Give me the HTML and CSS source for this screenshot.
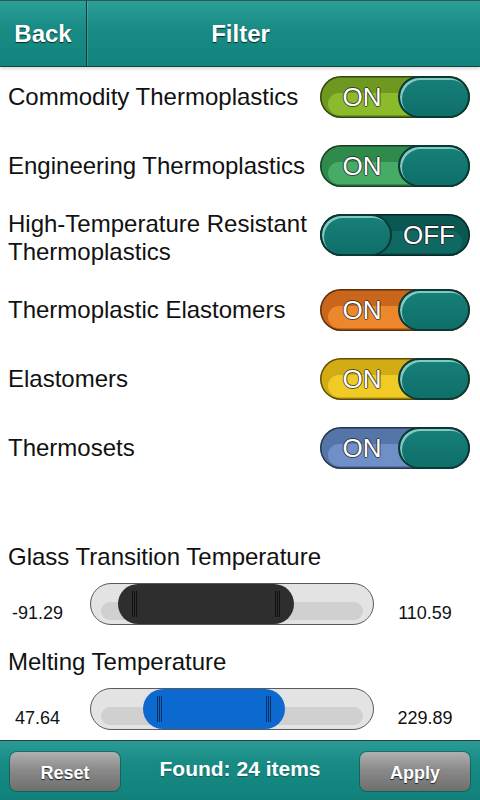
FILE: index.html
```html
<!DOCTYPE html>
<html lang="en">
<head>
    <meta charset="UTF-8">
    <meta name="viewport" content="width=device-width, initial-scale=1.0">
    <title>Filter</title>
    <link rel="stylesheet" href="styles.css">
</head>
<body>
    <div class="header">
        <div class="back-button">Back</div>
        <div class="title">Filter</div>
    </div>

    <div class="rows">
        <div class="row">
            <span class="row-label">Commodity Thermoplastics</span>
            <div class="toggle lime"><span class="toggle-text">ON</span><span class="knob"></span></div>
        </div>
        <div class="row">
            <span class="row-label">Engineering Thermoplastics</span>
            <div class="toggle green"><span class="toggle-text">ON</span><span class="knob"></span></div>
        </div>
        <div class="row tall">
            <span class="row-label">High-Temperature Resistant<br>Thermoplastics</span>
            <div class="toggle off"><span class="knob"></span><span class="toggle-text">OFF</span></div>
        </div>
        <div class="row">
            <span class="row-label">Thermoplastic Elastomers</span>
            <div class="toggle orange"><span class="toggle-text">ON</span><span class="knob"></span></div>
        </div>
        <div class="row">
            <span class="row-label">Elastomers</span>
            <div class="toggle yellow"><span class="toggle-text">ON</span><span class="knob"></span></div>
        </div>
        <div class="row">
            <span class="row-label">Thermosets</span>
            <div class="toggle blue"><span class="toggle-text">ON</span><span class="knob"></span></div>
        </div>
    </div>

    <div class="ranges">
        <div class="range-title">Glass Transition Temperature</div>
        <div class="range-row">
            <span class="range-value">-91.29</span>
            <div class="track">
                <div class="thumb dark" style="left: 27px; width: 176px;"><span class="grip"></span><span class="grip"></span></div>
            </div>
            <span class="range-value">110.59</span>
        </div>

        <div class="range-title second">Melting Temperature</div>
        <div class="range-row">
            <span class="range-value">47.64</span>
            <div class="track">
                <div class="thumb blue-thumb" style="left: 52px; width: 142px;"><span class="grip"></span><span class="grip"></span></div>
            </div>
            <span class="range-value">229.89</span>
        </div>
    </div>

    <div class="footer">
        <div class="footer-button">Reset</div>
        <div class="found">Found: 24 items</div>
        <div class="footer-button">Apply</div>
    </div>
</body>
</html>
```

FILE: styles.css
```css
body {
    font-family: "Liberation Sans", Arial, sans-serif;
    margin: 0;
    padding: 0;
    width: 480px;
    height: 800px;
    display: flex;
    flex-direction: column;
    background-color: #fff;
    color: #111;
    overflow: hidden;
}

/* top bar */
.header {
    height: 67px;
    box-sizing: border-box;
    display: flex;
    background: linear-gradient(#2c9f99, #198c85 40%, #11847d);
    border-top: 1px solid #2d5553;
    border-bottom: 1px solid #17403d;
    box-shadow: 0 2px 3px rgba(0, 0, 0, 0.15);
    color: #fff;
    font-weight: bold;
    font-size: 24px;
    text-shadow: 0 1px 1px rgba(0, 0, 0, 0.7);
}

.back-button {
    width: 86px;
    display: flex;
    align-items: center;
    justify-content: center;
    border-right: 1px solid #0f3a37;
    box-shadow: 1px 0 0 rgba(255, 255, 255, 0.15);
}

.title {
    flex: 1;
    display: flex;
    align-items: center;
    justify-content: center;
    padding-right: 86px;
}

/* switch rows */
.row {
    display: flex;
    align-items: center;
    justify-content: space-between;
    padding: 9px 10px 18px 8px;
}

.row.tall {
    padding: 5px 10px 14px 8px;
}

.row.tall .toggle {
    margin-bottom: 6px;
}

.row-label {
    font-size: 24px;
    line-height: 28px;
}

.toggle {
    position: relative;
    width: 150px;
    height: 42px;
    flex-shrink: 0;
    display: flex;
    align-items: center;
    border-radius: 21px;
    overflow: hidden;
    background-color: var(--dark);
    box-shadow: inset 0 0 0 1.5px rgba(0, 0, 0, 0.55);
}

.toggle::before {
    content: "";
    position: absolute;
    left: 8px;
    right: 40px;
    top: 17px;
    bottom: 3px;
    border-radius: 14px;
    background-color: var(--light);
}

.toggle.off::before {
    left: 40px;
    right: 8px;
}

.toggle-text {
    position: relative;
    flex: 1;
    text-align: center;
    color: #fff;
    font-size: 26px;
    line-height: 42px;
    padding-left: 6px;
    text-shadow: -1px 0 rgba(30, 30, 30, 0.7), 1px 0 rgba(30, 30, 30, 0.7), 0 -1px rgba(30, 30, 30, 0.7), 0 1px rgba(30, 30, 30, 0.7);
}

.toggle.off .toggle-text {
    padding-left: 0;
    padding-right: 4px;
}

.knob {
    position: relative;
    width: 72px;
    height: 42px;
    box-sizing: border-box;
    border-radius: 21px;
    border: 2px solid #0a3835;
    background: linear-gradient(#178079, #0f6f69);
    box-shadow: inset 2px 2px 0 rgba(170, 225, 218, 0.75);
}

.lime { --dark: #6f9820; --light: #8bbb2b; }
.green { --dark: #2e8b4c; --light: #46ab66; }
.orange { --dark: #c9661b; --light: #ec872c; }
.yellow { --dark: #d3ab14; --light: #f1cb25; }
.blue { --dark: #5574a8; --light: #6f8fc6; }
.off { --dark: #0b5853; --light: #0f6862; }

/* range sliders */
.ranges {
    margin-top: 56px;
}

.range-title {
    font-size: 24px;
    line-height: 27px;
    padding-left: 8px;
}

.range-title.second {
    margin-top: 23px;
}

.range-row {
    display: flex;
    align-items: center;
    margin-top: 13px;
}

.range-value {
    width: 75px;
    font-size: 18px;
    line-height: 20px;
    padding-top: 18px;
    text-align: center;
}

.range-row .range-value:last-child {
    flex: 1;
    padding-right: 4px;
}

.track {
    position: relative;
    width: 284px;
    height: 42px;
    box-sizing: border-box;
    margin-left: 15px;
    border: 1px solid #5a5a5a;
    border-radius: 21px;
    background-color: #e3e3e3;
}

.track::before {
    content: "";
    position: absolute;
    left: 10px;
    right: 10px;
    top: 18px;
    bottom: 4px;
    border-radius: 10px;
    background-color: #d0d0d0;
}

.thumb {
    position: absolute;
    top: 0;
    height: 40px;
    border-radius: 20px;
    display: flex;
    align-items: center;
    justify-content: space-between;
    padding: 0 14px;
    box-sizing: border-box;
}

.thumb.dark {
    background-color: #2e2e2e;
}

.thumb.blue-thumb {
    background-color: #0b69cf;
}

.grip {
    width: 5px;
    height: 26px;
    border-left: 1px solid rgba(0, 0, 0, 0.55);
    border-right: 1px solid rgba(0, 0, 0, 0.55);
    box-sizing: border-box;
    background: linear-gradient(90deg, transparent 1px, rgba(0, 0, 0, 0.55) 1px, rgba(0, 0, 0, 0.55) 2px, transparent 2px);
}

.dark .grip {
    border-color: #111;
    background: linear-gradient(90deg, transparent 1px, #111 1px, #111 2px, transparent 2px);
}

/* bottom bar */
.footer {
    margin-top: auto;
    height: 60px;
    box-sizing: border-box;
    display: flex;
    align-items: center;
    justify-content: space-between;
    padding: 0 10px;
    border-top: 1px solid #2d3d3c;
    background: linear-gradient(#2a9b95, #178a83 40%, #10827b);
    color: #fff;
    font-weight: bold;
}

.footer-button {
    width: 110px;
    height: 39px;
    margin-top: 1px;
    display: flex;
    align-items: center;
    justify-content: center;
    padding-top: 4px;
    box-sizing: border-box;
    border-radius: 7px;
    background: linear-gradient(#b0b0b0, #8a8a8a 45%, #6e6e6e);
    box-shadow: 0 0 0 1px rgba(0, 0, 0, 0.25);
    font-size: 18px;
    text-shadow: 0 1px 1px rgba(0, 0, 0, 0.8);
}

.found {
    font-size: 21px;
    padding-bottom: 4px;
    text-shadow: 0 1px 1px rgba(0, 0, 0, 0.3);
}
```
